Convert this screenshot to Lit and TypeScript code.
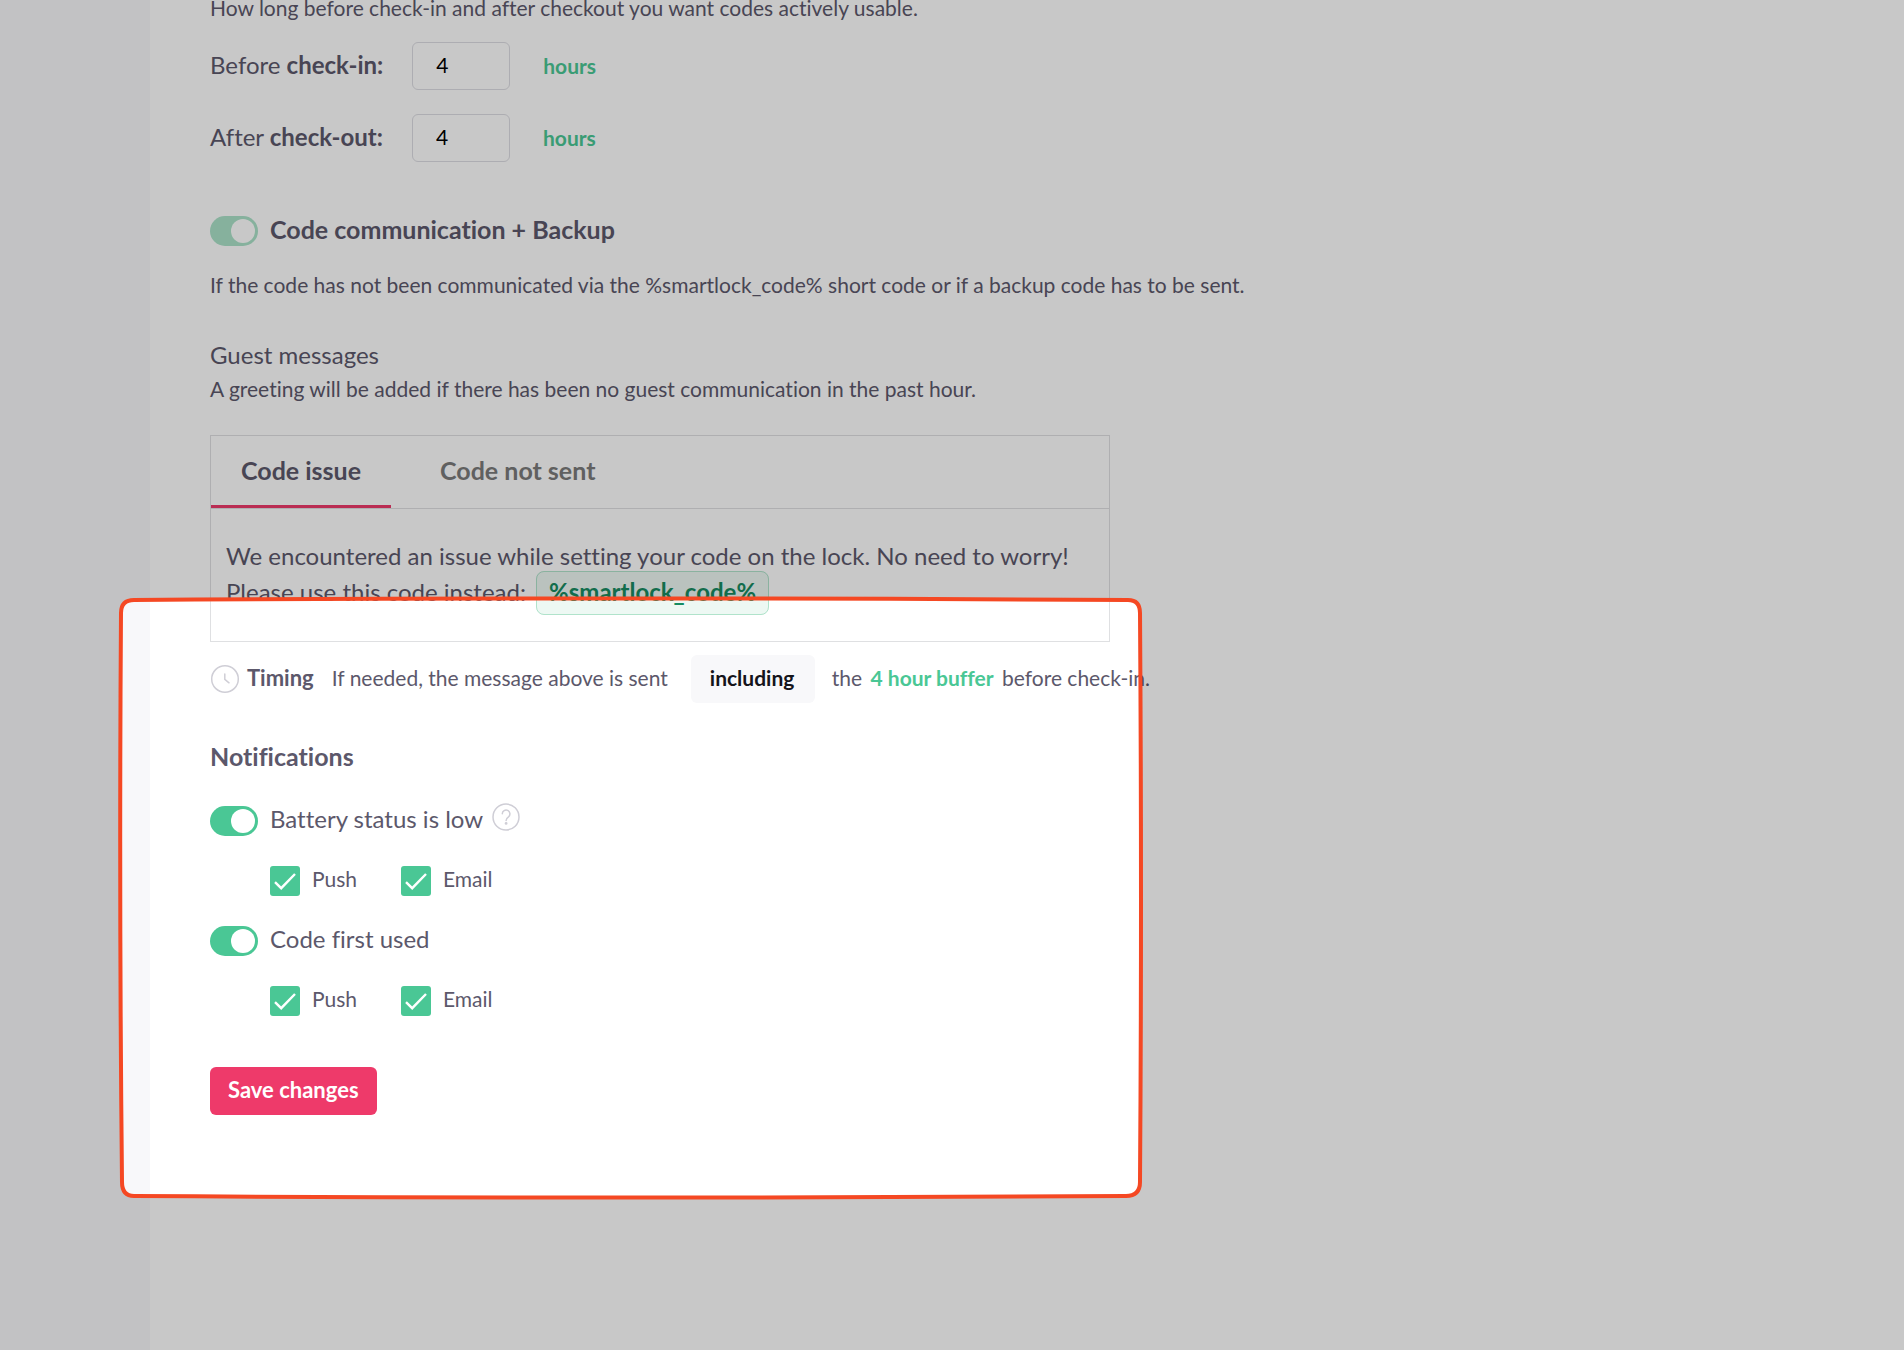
import { LitElement, html, css, svg } from "lit";
import { customElement, property } from "lit/decorators.js";

@customElement("toggle-row")
class ToggleRow extends LitElement {
  @property() label = "";
  @property({ type: Boolean }) strong = false;
  @property({ type: Boolean }) muted = false;
  @property({ type: Boolean }) help = false;

  static styles = css`
    :host { display: flex; align-items: center; height: 30px; }
    .row { display: flex; align-items: center; gap: 12px; }
    .switch {
      appearance: none; margin: 0; flex: none; box-sizing: border-box;
      width: 48px; height: 30px; border-radius: 15px; padding: 3px;
      background: #4ac795; display: flex; justify-content: flex-end;
    }
    .switch::before {
      content: ""; width: 24px; height: 24px; border-radius: 50%; background: #fff;
    }
    .switch:not(:checked) { background: #c9c8d0; justify-content: flex-start; }
    .muted { background: #abe2c9; }
    .text { padding-bottom: 4px; font-size: 24px; line-height: 30px; }
    .strong { font-size: 25px; font-weight: 700; }
    .help {
      border: 0; background: none; padding: 0; width: 28px; height: 28px;
      margin: 0 0 8px 9px;
    }
    .help svg { display: block; }
  `;

  render() {
    return html`
      <label class="row">
        <input type="checkbox" role="switch" class="switch ${this.muted ? "muted" : ""}" checked />
        <span class="text ${this.strong ? "strong" : ""}">${this.label}</span>
      </label>
      ${this.help
        ? html`<button class="help" aria-label="Help">
            <svg width="28" height="28" viewBox="0 0 28 28" fill="none" stroke="#cfced6" stroke-width="1.5" stroke-linecap="round">
              <circle cx="14" cy="14" r="13" />
              <path d="M10.3 10.8a3.8 3.8 0 1 1 6.2 3c-1.5 1.1-2.4 1.8-2.4 3.6" />
              <circle cx="14.1" cy="20.4" r="0.7" fill="#cfced6" />
            </svg>
          </button>`
        : ""}
    `;
  }
}

@customElement("channel-checks")
class ChannelChecks extends LitElement {
  static styles = css`
    :host { display: flex; padding-left: 60px; }
    .item { display: flex; align-items: center; gap: 12px; height: 30px; width: 131px; }
    .box {
      position: relative; width: 30px; height: 30px; flex: none; border-radius: 3px;
      display: grid; place-items: center; background: #4ac795;
    }
    .input { appearance: none; margin: 0; width: 30px; height: 30px; grid-area: 1 / 1; }
    .mark { grid-area: 1 / 1; pointer-events: none; }
    .input:not(:checked) + .mark { visibility: hidden; }
    .text { padding-bottom: 4px; font-size: 21px; line-height: 26px; }
  `;

  render() {
    return html`${["Push", "Email"].map(
      (name) => html`
        <label class="item">
          <span class="box">
            <input type="checkbox" class="input" checked />
            <svg class="mark" width="30" height="30" viewBox="0 0 30 30" fill="none" stroke="#fff" stroke-width="2.4">
              <path d="M5 16.2L11.2 22.2L25 8" />
            </svg>
          </span>
          <span class="text">${name}</span>
        </label>
      `
    )}`;
  }
}

@customElement("app-root")
class AppRoot extends LitElement {
  static styles = css`
    :host {
      display: block; position: relative; overflow: hidden; min-height: 100vh;
      font-family: Lato, "Liberation Sans", sans-serif; font-size: 21px; line-height: 30px;
      color: #5c586b; font-variant-ligatures: none;
    }
    .page { display: flex; min-height: 100vh; }
    .side { flex: none; width: 150px; background: #f8f8fa; }
    .main { flex: 1; min-width: 0; padding: 0 60px; background: #fff; }
    p, h2, h3 { margin: 0; font-size: 21px; font-weight: 400; }
    input, select, button { font-family: inherit; }
    .main .intro { line-height: 16px; }
    .buffers { display: grid; gap: 24px; margin-top: 26px; }
    .buffer { display: flex; align-items: center; }
    .buffer label { font-size: 24px; padding-bottom: 3px; }
    .hours {
      box-sizing: border-box; width: 98px; height: 48px; margin: 0 33px 0 29px; padding: 0 23px 3px;
      border: 1px solid #dddde3; border-radius: 6px; background: #fff; color: #000; font-size: 21px;
    }
    .unit { color: #4ac795; font-weight: 700; }
    .backup { margin-top: 54px; }
    .about { margin-top: 24px; }
    .main .guest { margin-top: 37px; font-size: 24px; line-height: 36px; }
    .note { padding-top: 1px; }
    .panel { max-width: 898px; margin-top: 31px; border: 1px solid #dfe0e2; }
    .tabs { display: flex; gap: 19px; border-bottom: 1px solid #dfe0e2; }
    .tab {
      height: 72px; border: 0; border-bottom: 3px solid transparent; background: none;
      padding: 0 30px 1px; font-size: 25px; font-weight: 700; color: #7b7b7b;
    }
    .tab.on { color: #5c586b; border-bottom-color: #ee3a6a; }
    .message { padding: 29px 15px 31px; font-size: 24px; line-height: 36px; }
    .pill {
      margin-left: 4px; padding: 5px 12px 8px; border: 1px solid #b0e3cb; border-radius: 8px;
      background: #edf8f3; color: #178b61; font-weight: 700;
    }
    .timing { display: flex; align-items: center; margin-top: 13px; white-space: nowrap; }
    .timing > span, .timing > label, .timing > b { padding-bottom: 2px; }
    .clock { flex: none; margin-right: 7px; }
    .timing > b { margin-right: 18px; font-size: 22px; }
    .mode {
      appearance: none; height: 48px; margin: 0 17px 0 23px; padding: 0 20px 3px 19px; border: 0; border-radius: 6px;
      background: #f8f8fa; color: #15141a; font-size: 21px; font-weight: 700;
    }
    .green { margin: 0 3px; color: #4ac795; }
    .main .notify { margin: 35px 0 32px; font-size: 25px; font-weight: 700; line-height: 36px; }
    .groups { display: grid; gap: 30px; }
    .save {
      height: 48px; margin: 51px 0 60px; padding: 0 18px 3px; border: 0; border-radius: 6px;
      background: #ee3a6a; color: #fff; font-size: 22px; font-weight: 700;
    }
    .spotlight { position: absolute; inset: 0; width: 100%; height: 100%; pointer-events: none; }
  `;

  private buffer(id: string, when: string, what: string) {
    return html`
      <div class="buffer">
        <label for=${id}>${when} <b>${what}</b></label>
        <input class="hours" id=${id} type="text" inputmode="numeric" .value=${"4"} />
        <span class="unit">hours</span>
      </div>
    `;
  }

  private spotlight() {
    const frame =
      "M134 600 Q630 597 1128 600 Q1140 600 1140 613 Q1142 900 1140 1182 Q1140 1196 1126 1196 Q630 1199 134 1196 Q122 1196 122 1182 Q119 900 121 613 Q121 600 134 600Z";
    return html`
      <svg class="spotlight" aria-hidden="true">
        ${svg`
          <path d="M0 0H8000V8000H0Z ${frame}" fill="#000" fill-opacity="0.216" fill-rule="evenodd" />
          <path d=${frame} fill="none" stroke="#f54823" stroke-width="4" />
        `}
      </svg>
    `;
  }

  render() {
    return html`
      <div class="page">
        <aside class="side"></aside>
        <main class="main">
          <p class="intro">How long before check-in and after checkout you want codes actively usable.</p>
          <div class="buffers">
            ${this.buffer("before", "Before", "check-in:")} ${this.buffer("after", "After", "check-out:")}
          </div>

          <toggle-row class="backup" label="Code communication + Backup" strong muted></toggle-row>
          <p class="about">
            If the code has not been communicated via the %smartlock_code% short code or if a backup code has to be sent.
          </p>

          <h3 class="guest">Guest messages</h3>
          <p class="note">A greeting will be added if there has been no guest communication in the past hour.</p>

          <section class="panel">
            <div class="tabs" role="tablist">
              <button class="tab on" role="tab" aria-selected="true">Code issue</button>
              <button class="tab" role="tab" aria-selected="false">Code not sent</button>
            </div>
            <div class="message" role="tabpanel">
              We encountered an issue while setting your code on the lock. No need to worry!<br />
              Please use this code instead: <span class="pill">%smartlock_code%</span>
            </div>
          </section>

          <div class="timing">
            <svg class="clock" width="30" height="30" viewBox="0 0 30 30" fill="none" stroke="#cfced6" stroke-width="1.5" stroke-linecap="round">
              <circle cx="15" cy="15" r="13.3" />
              <path d="M14.8 10v5.3l4.2 3.5" />
            </svg>
            <b>Timing</b>
            <label for="mode">If needed, the message above is sent</label>
            <select class="mode" id="mode"><option>including</option></select>
            <span>the <b class="green">4 hour buffer</b> before check-in.</span>
          </div>

          <h2 class="notify">Notifications</h2>
          <div class="groups">
            <toggle-row label="Battery status is low" help></toggle-row>
            <channel-checks></channel-checks>
            <toggle-row label="Code first used"></toggle-row>
            <channel-checks></channel-checks>
          </div>
          <button class="save">Save changes</button>
        </main>
      </div>
      ${this.spotlight()}
    `;
  }
}
